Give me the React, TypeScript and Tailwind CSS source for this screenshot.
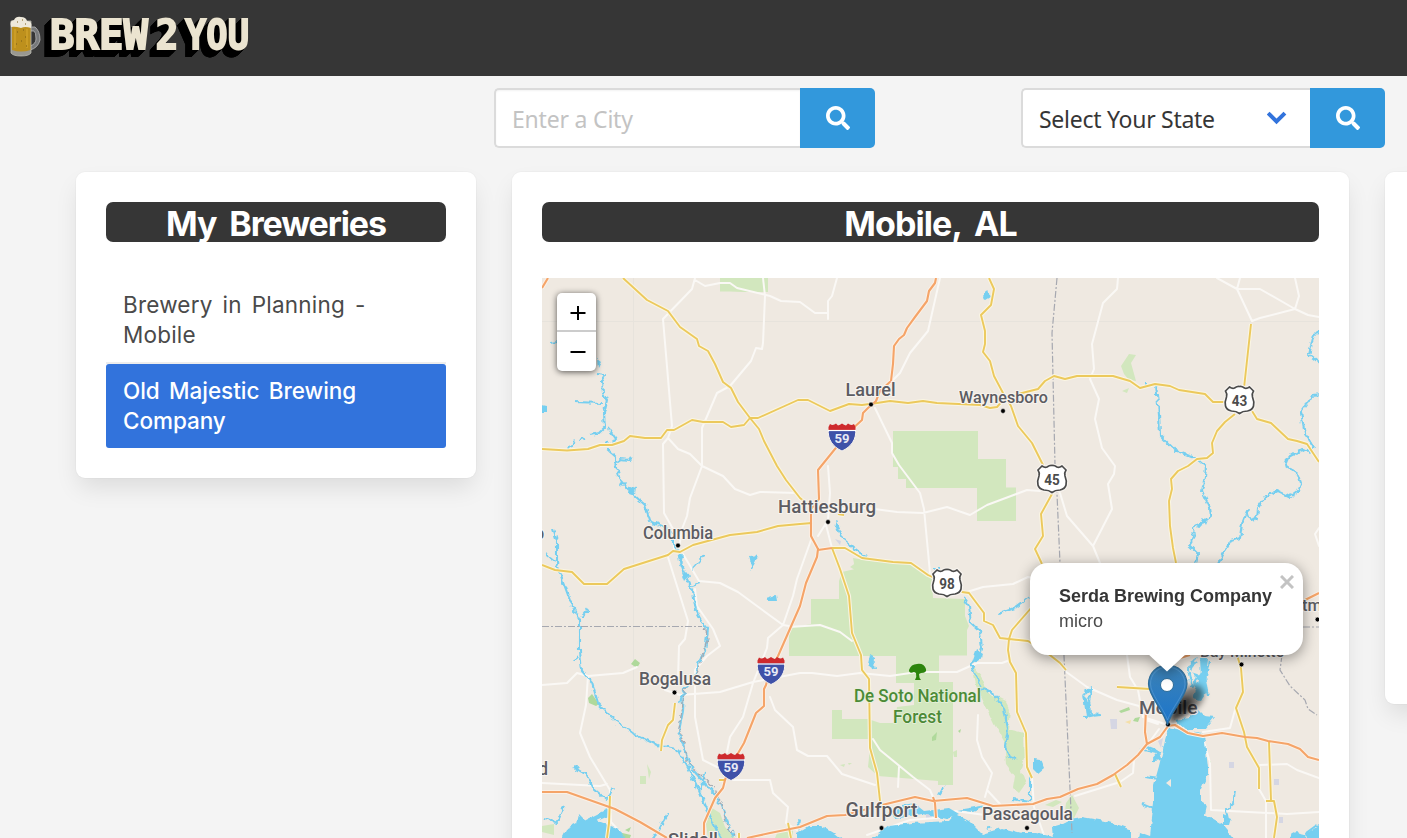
import React from "react";
import { FaSearch } from "react-icons/fa";

const yellowRoads = [
  "M623 278L647 300L668 311L680 327L697 339L699 346L708 351L715 364L723 382L731 388L738 402L750 418L759 429L764 441L777 466L786 480L800 498L811 507",
  "M542 449L567 450.500L588 449L600 445L612 445L624 441L630 436L645 438L661 438L667 430L674 430L692 420L703 422L723 422L731 427L744 425L750 418L758 418L798 400L808 400L830 411L849 404L862 405L877 403L890 401L908 403L923 401L937 403L980 405L990 408L997 407L1005 398L1022 393L1038 389L1045 381L1054 376L1065 379L1077 376L1113 376L1130 381L1140 388L1155 384L1170 386L1179 390L1205 394L1213 402L1225 402",
  "M989 278L994 289L991 305L981 315L985 331L985 344L983 352L990 361L994 376L1003 393L1011 406L1018 426L1032 443L1043 465L1051 479L1052 494L1041 514L1043 536L1035 549L1042 564",
  "M1032 607L1012 630L1009 639L1008 650L1010 662L1016 673L1017 712L1026 733L1027 767L1032 778",
  "M832 548L845 548L862 558L893 562L911 563L928 575L945 583L962 592L969 593L984 613L984 621L993 625L1000 638L1009 639L1028 641L1046 652L1060 663L1066 670",
  "M832 548L840 569L849 596L852 633L861 655L862 670L869 679L870 748L877 773L880 801",
  "M542 565L555 570L572 572L584 584L607 584L624 569L668 555L673 551L680 552L693 545L730 535L757 532L778 526L800 524L812 523",
  "M838 514L844 515",
  "M1251 324L1244 388",
  "M1235 414L1225 422L1217 431L1212 443L1213 453L1207 458L1197 459L1188 466L1178 471L1171 479L1172 489L1169 501L1170 526L1173 548L1176 563",
  "M1252 411L1257 419L1271 423L1288 439L1297 441L1307 444L1313 453L1319 462",
  "M1237 655L1241 668L1243 692L1236 708L1244 732L1247 747L1259 768L1259 789",
  "M1269 742L1271 800M1266 801L1274 801L1277 817L1274 838",
  "M1117 687L1150 689",
  "M1115 774L1121 787",
  "M675 703L673 720L668 725L662 740L661 751",
  "M610 796L609 823L607 838",
  "M788 823L791 838M739 833V838M719 780H726",
].join("");

const orangeRoads = [
  "M936 278L935 283L929 291L927 301L915 317L907 328L904 335L899 339L894 346L893 364L891 381L880 391L876 401L868 408L863 413L862 420L850 431L835 449L822 465L818 470L819 499L811 509L811 536L818 549L817 557L806 583L800 606L778 656L770 670L766 685L764 689L764 706L756 713L744 743L737 755L730 767L725 780L723 788L715 798L704 823L704 838",
  "M818 550L832 548",
  "M542 792L567 792L615 809L640 822L667 838",
  "M747 838L770 833L800 827L827 816L845 815L882 805L915 797L933 801L967 798L993 806L1033 804L1047 799L1060 797L1078 789L1097 784L1113 775L1127 765L1138 755L1147 744L1160 737L1168 726L1175 725L1188 733L1203 736L1222 733L1245 737L1257 738L1268 741L1288 744L1300 749L1308 757L1319 760",
  "M1146 708L1145 732L1147 744",
  "M933 797L935 803L936 818",
  "M542 288L548 278",
  "M1303 601L1319 593",
  "M1180 658L1190 655",
].join("");

const whiteRoads = [
  "M695 278L692 289L663 319L672 426L668 438L663 444L664 513L673 529L674 550",
  "M695 280L705 286L720 283L730 283L737 288L770 296L781 301L800 302L815 313L828 313M828 319L828 301L832 296L837 278",
  "M763 278L765 296L763 343L762 349L756 348L751 361L730 386L717 393L702 428L702 466M702 466L690 498L687 516L682 529L679 548",
  "M668 438L678 449L690 454L702 466L723 476L735 489L750 495L760 492L797 493",
  "M667 554L688 621L685 639L679 646L678 680",
  "M683 554L699 581L720 583L738 592L757 606L783 625L789 626",
  "M811 540L797 579L793 596L783 625L768 638L767 648L753 683L743 717L730 737L727 752",
  "M695 589L697 606L713 629L720 646L707 656L695 670L695 717L703 760L717 767",
  "M542 685L567 683L577 673L588 676L623 673L637 667M588 676L586 705L580 733L590 757L610 790L611 822L620 832M542 783L600 786L607 784",
  "M665 690L680 695L720 692L753 682L800 673L812 673L837 676L860 673L890 676L917 672L957 672L977 663L1002 663L1010 660",
  "M770 697L775 710L793 727L797 750L808 756L827 756L842 774L875 785M733 780L770 780L773 793L788 807L786 823L797 830",
  "M873 739L880 750L913 777L930 790L933 797M899 767L898 787",
  "M978 715L977 740L982 757L992 773L985 797M987 790L1000 804",
  "M940 278L928 331L910 353L900 373L892 381M875 408L892 443L892 453L899 465L920 493L924 509L930 573L934 580",
  "M830 509L867 508L897 512L923 513L947 507L970 515L987 505L1027 490L1040 491M828 466L830 493L828 520L818 536M826 525L832 548",
  "M967 592L983 587L1013 584L1028 577L1042 580M789 627L820 625L840 632L852 641",
  "M1118 278L1117 289L1103 303L1092 344L1094 369L1090 379L1099 399L1095 419L1102 448L1115 466L1114 474L1108 484L1112 509L1093 546L1100 563M1060 493L1067 516L1093 546",
  "M1217 278L1237 289L1260 289L1295 309L1308 315L1319 317M1240 278L1237 289L1252 321L1260 318L1295 309L1299 296L1295 278",
  "M1319 528L1315 534L1319 546M1127 655L1130 677L1138 690L1143 717L1168 725M1065 671L1087 687L1117 700L1139 706L1146 720L1158 724",
  "M1203 732L1230 728L1235 710M1203 738L1210 763L1211 810L1287 814L1319 812M1260 765L1287 764L1297 770L1319 778M1259 789L1266 801L1266 838",
  "M1032 778L1034 807L1045 838M867 835L910 820L947 817L955 811L985 815M1075 796L1120 782L1133 773L1134 760L1148 744L1159 729",
].join("");

const rivers = [
  "M548 342L557 341M595 373L603 374L600 380L601 392L605 400L602 412L603 426L597 432L588 434M572 401L600 402M567 447L572 440M578 439L584 437M607 428L614 438L610 444L604 440M605 448L614 456L614 465L618 478L627 488L633 495L643 504L648 520L660 525L671 532L671 543L676 548L678 560L684 576L691 591L694 610L700 621L706 628L703 650L697 660L693 677L681 690L678 702",
  "M612 463L618 459L627 460L630 456M551 528L555 540L555 562L559 575L570 605L578 620L578 650L580 670L590 682L596 702L610 717L632 733L655 744L675 748L685 765L695 785L705 808L715 830L720 838",
  "M542 552L553 561M579 617L586 608M576 655L573 660",
  "M572 766L585 774L592 788L605 799L611 787M543 817L555 822L562 806",
  "M682 686L681 710L677 730L683 750L688 765L698 777L712 792L720 805L728 828L733 836M703 772L699 790",
  "M651 838L659 824L666 812M702 554L690 567M690 585L699 582M755 554L749 568M750 556L751 563",
  "M833 520L840 537L853 548L864 556M931 568L938 568M961 596L967 605L969 622L978 630L980 647L978 656L969 663L975 678L980 687L992 693L1002 707L1006 728L1003 745L1008 756L1013 758",
  "M996 613L1013 607L1028 596M869 656L872 668M942 786L937 794",
  "M1154 383L1157 413L1158 434L1174 450L1196 458L1204 465L1203 476L1200 490L1208 507L1209 514L1200 522L1191 527L1192 536L1187 544L1196 553L1194 563",
  "M1319 331L1312 333L1307 354L1319 363M1319 394L1310 395L1299 411L1303 433L1312 445L1310 452L1301 448L1286 457L1283 464L1296 473L1299 482L1296 490L1288 496L1275 490L1264 495L1256 507L1255 517L1248 519L1245 510L1240 523L1238 537L1229 540L1222 552L1216 563",
  "M1144 383L1150 383M1195 660L1186 668L1190 686L1200 672M1207 660L1203 680L1206 694",
  "M1082 693L1089 687L1087 700L1088 713M1089 713L1098 714L1083 716M1233 791L1231 803L1224 810L1226 820",
  "M1145 746L1158 751M1142 776L1158 778M1140 803L1154 809M1028 776V800M1010 798L1028 801M1290 838L1296 830L1300 836M1304 832L1315 824",
].join("");

type Label = { text: string; x: number; y: number; width: number; size: number };

const labels: Label[] = [
  { text: "Laurel", x: 845.5, y: 396, width: 50, size: 18 },
  { text: "Waynesboro", x: 959, y: 403, width: 89, size: 16.5 },
  { text: "Hattiesburg", x: 778, y: 513, width: 98, size: 19 },
  { text: "Columbia", x: 643, y: 539, width: 70, size: 17.5 },
  { text: "Bogalusa", x: 639, y: 685, width: 72, size: 17.5 },
  { text: "Gulfport", x: 845.5, y: 817, width: 72, size: 19.5 },
  { text: "Pascagoula", x: 982, y: 820, width: 91, size: 18 },
  { text: "Slidell", x: 668, y: 846, width: 50, size: 17.5 },
  { text: "Mobile", x: 1139, y: 713.5, width: 58.5, size: 19 },
  { text: "Bay Minette", x: 1200, y: 657, width: 84, size: 16.5 },
  { text: "Atmore", x: 1291, y: 611, width: 55, size: 16.5 },
  { text: "Hammond", x: 469, y: 775, width: 79, size: 17.5 },
  { text: "McComb", x: 482, y: 539, width: 62, size: 17 },
];

const towns = [
  [871, 404.5], [1003, 411], [828, 522], [678, 545.5], [674.5, 692.5],
  [881.500, 828], [1027, 828], [1168, 724.5], [1241.5, 664.5], [1317.5, 619.5],
];

function Interstate({ x, y }: { x: number; y: number }) {
  return (
    <g transform={`translate(${x} ${y})`}>
      <path d="M-13.500 -8 C-15 2 -9 10 0 14 C9 10 15 2 13.500 -8Z" fill="#3f51a8" stroke="#f7f3ee" strokeWidth="1" />
      <path d="M-13.500 -7V-10L-12 -13Q-9 -11 -6 -13.500L-4 -11.500Q-2 -12 0 -13.500Q2 -12 4 -11.500L6 -13.500Q9 -11 12 -13L13.500 -10V-7Z" fill="#ce2a2d" />
      <path d="M-14 -6.500H14" stroke="#fff" strokeWidth="1.200" />
      <text x="0" y="5.500" textAnchor="middle" fontSize="13.500" fontWeight="700" fill="#e8eaf6" textLength="15" lengthAdjust="spacingAndGlyphs">59</text>
    </g>
  );
}

const usShield =
  "M-10 -13Q-7 -11 -5 -12Q-2 -14 0 -13.500Q2 -14 5 -12Q7 -11 10 -13L14 -9Q12 -6 13 -3Q15 2 14 6Q13 10 8 11Q3 11 0 13.500Q-3 11 -8 11Q-13 10 -14 6Q-15 2 -13 -3Q-12 -6 -14 -9Z";

function Highway({ x, y, n }: { x: number; y: number; n: string }) {
  return (
    <g transform={`translate(${x} ${y})`}>
      <path d={usShield} fill="#fff" stroke="#f7f3ee" strokeWidth="4" />
      <path d={usShield} fill="#fff" stroke="#4a4a4a" strokeWidth="1.700" />
      <text x="0" y="5.500" textAnchor="middle" fontSize="14" fontWeight="700" fill="#4c4c4c" textLength="15.500" lengthAdjust="spacingAndGlyphs">{n}</text>
    </g>
  );
}

function BreweryMap() {
  return (
    <svg viewBox="542 278 777 560" className="block h-[560px] w-[777px] font-['Roboto',sans-serif]">
      <defs>
        <filter id="meander" x="-5%" y="-5%" width="110%" height="110%" colorInterpolationFilters="sRGB">
          <feTurbulence type="fractalNoise" baseFrequency="0.22" numOctaves="1" seed="4" />
          <feDisplacementMap in="SourceGraphic" scale="7" xChannelSelector="R" yChannelSelector="G" />
          <feOffset dx="1.500" dy="1" />
        </filter>
        <filter id="shore" x="-5%" y="-5%" width="110%" height="110%" colorInterpolationFilters="sRGB">
          <feTurbulence type="fractalNoise" baseFrequency="0.16" numOctaves="1" seed="9" />
          <feDisplacementMap in="SourceGraphic" scale="6" xChannelSelector="R" yChannelSelector="G" />
          <feOffset dx="2" dy="1" />
        </filter>
        <filter id="soft" x="-50%" y="-50%" width="200%" height="200%"><feGaussianBlur stdDeviation="3" /></filter>
        <linearGradient id="pin" x1="0" y1="0" x2="0" y2="1">
          <stop offset="0" stopColor="#3d82b5" />
          <stop offset="1" stopColor="#1b75cc" />
        </linearGradient>
      </defs>
      <rect x="542" y="278" width="777" height="560" fill="#efe9e1" />
      <path d="M542 321.500H1319M633.500 278V838" stroke="#e7e3dc" strokeWidth="1" />

      <g fill="#d2e7be">
        <path d="M720 278H768V292H742L730 291.500H720Z" />
        <path d="M893 431H978V459H1006V487.500H1016V521H977V488H906V479H898V467H893Z" />
        <path d="M853 558L870 561L910 563L932 578L933 598L965 599V616L969 626L967 630V655.500H939V682H953V785H938V781L878 776L868 767L871 739H832V710H842V719H868L880 723H895L897 707L914 705V683H896V656H789V628L811 624V599H839V581L842 572L855 569Z" />
        <g filter="url(#shore)">
          <path d="M970 665L980 677L987 692L1003 700L1008 710L1006 728L1022 732L1023 757L1019 770L1024 782L1017 792L1011 787L1013 775L1004 763L1002 740L992 723L982 702L975 687Z" />
        </g>
        <path d="M712 808L720 813L725 827L735 838H708L706 824Z" />
        <path d="M850 567L857 562L855 570ZM640 776H646V784H640ZM647 764L651 772L649 779ZM542 826L554 824V835L542 832ZM1066 803L1072 795L1079 808L1073 820H1064ZM1045 805L1056 800L1062 802L1053 807ZM778 831L793 830V838H775ZM790 650H800V655H790Z" />
        <path d="M1121 366L1129 354L1136 355L1131 363L1136 381L1129 380L1124 374ZM1122 391L1129 388L1127 393Z" />
        <path d="M840 765l5 -1l-1 3ZM848 763l4 0l-3 2ZM953 752l4 -2v7h-3ZM1293 651l3 -1Z" />
      </g>
      <g fill="#afd99b">
        <path d="M631 664L635 659L640 663L637 668ZM588 698L592 694L599 704L596 706L589 703ZM932 737L937 732L936 740L932 741ZM1119 711L1129 707L1130 710L1121 713ZM1135 718L1140 717L1138 722L1133 721ZM1208 758L1211 762L1210 766ZM625 830L631 827L629 832ZM618 832L631 835L630 838H619ZM958 731l3 -2l-1 4Z" />
      </g>
      <g fill="#d5d6e3">
        <path d="M1110 719H1117V729H1111ZM1229 762H1234V768H1229ZM1274 779H1279V785H1274ZM1279 817H1283V823H1279ZM926 813H932V818H926ZM1158 741L1163 738L1161 748ZM835 539L841 541L840 545Z" />
        <path d="M1125 722L1131 720L1130 724Z" fill="#f4dfa8" />
      </g>

      <path d={whiteRoads} fill="none" stroke="#faf8f5" strokeWidth="2" strokeLinejoin="round" strokeLinecap="round" />

      <g fill="#76cff0" filter="url(#shore)">
        <path d="M1167 726L1175 728L1200 732L1203 740L1206 767L1206 773L1198 790L1198 800L1205 804L1203 813L1220 823L1238 845H1135L1137 831L1148 835L1150 817L1152 802L1152 783L1157 765L1163 740Z" />
        <path d="M1172 719L1188 717L1196 708L1203 715L1213 716L1203 728L1183 728ZM1198 657L1206 658L1204 675L1206 690L1199 700L1190 698L1196 678L1188 670L1189 660L1195 656L1190 665L1199 676Z" />
        <path d="M1058 823L1068 818L1080 816L1103 820L1120 825L1128 828V845H1058Z" />
        <path d="M860 845L887 825L910 822L947 820L953 813L967 820L980 833L1000 827L1020 832L1033 832L1060 838V845Z" />
        <path d="M795 845V832L807 825L820 825L832 832L848 845ZM885 810L900 805L913 803L922 810L947 807L957 813L945 818L920 813L893 818ZM955 809L985 804L970 811Z" />
        <path d="M556 845L565 827L575 822L577 813L583 819L605 808L609 814L595 820L617 828L628 845Z" />
        <path d="M595 358L599 361L596 367ZM540 404L545 405V411H540ZM982 295L986 289L988 296L983 299ZM748 555L756 554L751 568ZM764 597L774 594L775 600L766 600ZM676 549L682 556L679 565ZM680 572L689 573L683 580ZM619 480L622 486L617 485ZM628 485L634 487L633 494L627 492ZM1199 517L1205 519L1203 524Z" />
        <path d="M1031 757L1038 758L1042 768L1036 773L1031 768ZM1081 692L1086 697L1090 713L1098 714L1084 717ZM1137 749L1155 748L1159 759L1148 761L1155 753ZM1221 813L1230 817L1228 824L1221 824ZM1285 845L1290 831L1303 834L1306 845ZM1304 832L1316 824L1325 827V845H1306ZM795 818L799 819L797 830ZM1050 826L1060 823V838H1051ZM985 824L989 827L986 829ZM868 654L873 657L872 668L866 663ZM975 648L981 652L979 658L970 662Z" />
      </g>
      <path d="M1166 783L1171 779V787ZM1195 659L1191 672L1200 675L1197 663Z" fill="#efe9e1" />
      <path d={rivers} fill="none" stroke="#76cff0" strokeWidth="2.100" strokeLinejoin="round" filter="url(#meander)" />

      <g fill="none" stroke="#a6a8b0" strokeWidth="1.200" strokeDasharray="7 2 2 2">
        <path d="M542 626.500H702M1057 278L1052 333L1055 465L1057 494L1060 563L1064 656L1072 833M1282 655L1280 670L1290 686L1305 700L1308 709L1317 715M1303 627H1319" />
        <path d="M703 627L706 637L700 655L695 672L682 690L680 710L677 728L683 745L685 760L698 774L713 788L720 804L725 825L733 834" filter="url(#meander)" />
      </g>

      <g fill="none" strokeLinejoin="round">
        <path d={yellowRoads} stroke="#faf5e3" strokeWidth="4" />
        <path d={orangeRoads} stroke="#fbf1e7" strokeWidth="4" />
        <path d={yellowRoads} stroke="#ecc95c" strokeWidth="1.900" />
        <path d={orangeRoads} stroke="#f5a468" strokeWidth="2.100" />
      </g>

      <Interstate x={842} y={437} />
      <Interstate x={771} y={670.500} />
      <Interstate x={731} y={766.500} />
      <Highway x={1239.500} y={400} n="43" />
      <Highway x={1052} y={479} n="45" />
      <Highway x={947} y={583} n="98" />

      <g fill="#5c5c62" stroke="#f7f3ee" strokeWidth="2.200" strokeLinejoin="round" paintOrder="stroke" fontWeight="500">
        {labels.map((l) => (
          <text key={l.text} x={l.x} y={l.y} fontSize={l.size} textLength={l.width} lengthAdjust="spacingAndGlyphs">{l.text}</text>
        ))}
      </g>
      <g fill="#4c8a37" stroke="#e7f1dc" strokeWidth="1.500" paintOrder="stroke" fontSize="17.500" fontWeight="500">
        <text x="854" y="701.500" textLength="127" lengthAdjust="spacingAndGlyphs">De Soto National</text>
        <text x="893" y="723" textLength="49" lengthAdjust="spacingAndGlyphs">Forest</text>
      </g>
      <path d="M915 680Q917 677 916 673L914 672Q909 674 909 670Q911 664 917 664Q924 663 926 669Q927 673 921 673L919 674Q919 678 921 680Z" fill="#2c850c" />
      {towns.map(([x, y]) => <circle key={x} cx={x} cy={y} r="2.400" fill="#000" stroke="#f7f3ee" strokeWidth=".6" />)}

      <path d="M1168 724L1176 695Q1195 678 1203 690Q1207 702 1190 713Z" fill="#000" opacity=".5" filter="url(#soft)" />
      <path d="M1168 725L1178 699L1192 697Q1194 708 1180 718Z" fill="#000" opacity=".6" filter="url(#soft)" />
      <path d="M1167.500 725C1164 711 1148.500 696 1148.500 684C1148.500 673 1157 665 1167.500 665C1178 665 1187 673 1187 684C1187 696 1171 711 1167.500 725Z" fill="url(#pin)" stroke="#2e6c97" strokeWidth="1.200" />
      <path d="M1167.500 720C1164 709 1150.500 694 1150.500 684C1150.500 674 1158 667 1167.500 667C1177 667 1185 674 1185 684C1185 694 1171 709 1167.500 720Z" fill="none" stroke="#62a0d3" strokeWidth="1" opacity=".55" />
      <circle cx="1167" cy="685" r="6.500" fill="#fff" stroke="#2e6c97" strokeWidth="1" />
    </svg>
  );
}

function Logo() {
  return (
    <svg viewBox="0 0 260 76" className="block h-[76px] w-[260px]">
      <path d="M30 27H35Q40 31 40 40Q38 48 30 50V46Q36 44 36 39Q36 32 34 31H30Z" fill="#77797b" stroke="#b8b8b8" strokeWidth=".8" />
      <path d="M11 21H31L31 53Q29 56 21 56Q13 56 11 53Z" fill="#999891" stroke="#c7c5ba" strokeWidth=".7" />
      <path d="M12 26H30.500V50Q21 53 12 50Z" fill="#bd901d" />
      <path d="M15 29V48M27 29V48" stroke="#d0a12a" strokeWidth="1.500" />
      <path d="M11 27Q9 21 14 20Q16 16 21 17Q26 17 27 21Q33 21 31 28Q25 26 21 28Q15 26 11 27Z" fill="#eee9db" />
      <path d="M17 32h1M23 30h1M25 37h1M21 41h1M16 44h1M26 46h1M17 22h1M22 20h1M25 24h1" stroke="#795c18" strokeWidth="1" />
      <g
        className="font-['DejaVu_Sans_Mono',monospace] font-bold [filter:drop-shadow(0_0_0.5px_#000)_drop-shadow(-1px_1px_0_#000)_drop-shadow(-1px_1px_0_#000)_drop-shadow(-2px_2px_0_#000)_drop-shadow(-3px_3px_0_#000)]"
        fill="#ebe4d0" stroke="#ebe4d0" strokeWidth="1.800" strokeLinejoin="miter" fontSize="40"
      >
        <text x="50" y="48.500" textLength="98" lengthAdjust="spacingAndGlyphs">BREW</text>
        <text x="155.500" y="48.500" textLength="23" lengthAdjust="spacingAndGlyphs">2</text>
        <text x="185" y="48.500" textLength="64" lengthAdjust="spacingAndGlyphs">YOU</text>
      </g>
    </svg>
  );
}

function SearchButton() {
  return (
    <button className="flex h-[60px] w-[75px] items-center justify-center rounded-r-[5px] bg-[#3298dc] text-2xl text-white">
      <FaSearch />
    </button>
  );
}

const panel = "rounded-[9px] bg-white p-[30px] shadow-[0_12px_24px_-3px_rgba(10,10,10,0.1),0_0_0_1px_rgba(10,10,10,0.02)]";
const heading = "h-10 rounded-[7px] bg-[#363636] text-center font-['Inter',sans-serif] text-[34px] font-bold leading-[43px] text-white";

export default function App() {
  return (
    <div className="h-[838px] w-[1407px] overflow-hidden bg-[#f4f4f4]">
      <header className="h-[76px] bg-[#363636]"><Logo /></header>

      <div className="flex pt-3 pl-[494px] font-['Noto_Sans',sans-serif] text-[23px]">
        <div className="flex w-[381px]">
          <input
            placeholder="Enter a City"
            className="h-[60px] w-[306px] rounded-l-[5px] border-2 border-r-0 border-[#dbdbdb] bg-white px-4 pt-0.5 tracking-[-0.2px] shadow-[inset_0_1px_2px_rgba(10,10,10,0.05)] placeholder:text-[#c3c3c3]"
          />
          <SearchButton />
        </div>
        <div className="ml-[146px] flex w-[364px]">
          <div className="flex h-[60px] w-[289px] items-center justify-between rounded-l-[5px] border-2 border-r-0 border-[#dbdbdb] bg-white pr-[23px] pl-4 text-[#363636]">
            <span className="pt-0.5 tracking-[-0.27px]">Select Your State</span>
            <svg viewBox="0 0 20 14" className="h-[14px] w-5"><path d="M2.500 3.500L9.500 10.500L16.500 3.500" fill="none" stroke="#3273dc" strokeWidth="4" strokeLinecap="square" strokeLinejoin="miter" /></svg>
          </div>
          <SearchButton />
        </div>
      </div>

      <main className="flex w-[1900px] items-start gap-9 pt-6 pl-[76px]">
        <aside className={`${panel} h-[306px] w-[400px]`}>
          <h2 className={heading}><span className="tracking-[-1.1px] [word-spacing:6px]">My Breweries</span></h2>
          <ul className="mt-9 font-['Inter',sans-serif] text-[22.5px] leading-[30px] text-[#4a4a4a]">
            <li className="border-b-2 border-[#ededed] px-[17px] pt-3 pb-3 tracking-[0.2px] [word-spacing:3.5px]">Brewery in Planning -<br />Mobile</li>
            <li className="h-[84px] rounded-[3px] bg-[#3273dc] px-[17px] pt-3 font-medium tracking-[-0.05px] text-white [word-spacing:3.5px]">Old Majestic Brewing<br />Company</li>
          </ul>
        </aside>

        <section className={`${panel} h-[740px] w-[837px]`}>
          <h2 className={heading}><span className="tracking-[-0.9px] [word-spacing:6px]">Mobile, AL</span></h2>
          <div className="relative mt-9 h-[560px] w-[777px] overflow-hidden">
            <BreweryMap />
            <div className="absolute top-[15px] left-[15px] w-[39px] overflow-visible rounded-[5px] bg-white shadow-[0_1px_6px_rgba(0,0,0,0.65)]">
              <button aria-label="Zoom in" className="flex h-[39px] w-full items-center justify-center border-b-2 border-[#ccc]">
                <svg viewBox="0 0 16 16" className="mt-0.5 ml-0.5 h-4 w-4"><path d="M.5 8H15.500M8 1V15" stroke="#000" strokeWidth="2" /></svg>
              </button>
              <button aria-label="Zoom out" className="flex h-[39px] w-full items-center justify-center">
                <svg viewBox="0 0 16 16" className="ml-0.5 h-4 w-4"><path d="M.5 8H15.500" stroke="#000" strokeWidth="2" /></svg>
              </button>
            </div>
            <div className="absolute top-[285px] left-[488px] h-[92px] w-[273px] [filter:drop-shadow(0_3px_7px_rgba(0,0,0,0.4))]">
              <svg viewBox="0 0 40 20" className="absolute top-[90px] left-[117px] h-5 w-10"><path d="M0 0H40L20 18.500Z" fill="#fff" /></svg>
              <div className="relative h-[92px] rounded-[18px] bg-white pt-[21px] pl-[29px] font-['Liberation_Sans',sans-serif] text-[18px] leading-[25px] text-[#4a4a4a]">
                <strong className="block whitespace-nowrap text-[#363636]">Serda Brewing Company</strong>
                <span>micro</span>
                <svg viewBox="0 0 14 14" className="absolute top-[12px] right-[9px] h-[14px] w-[14px]"><path d="M1 1L13 13M13 1L1 13" stroke="#c3c3c3" strokeWidth="3" /></svg>
              </div>
            </div>
          </div>
        </section>

        <aside className={`${panel} h-[532px] w-[400px]`} />
      </main>
    </div>
  );
}
